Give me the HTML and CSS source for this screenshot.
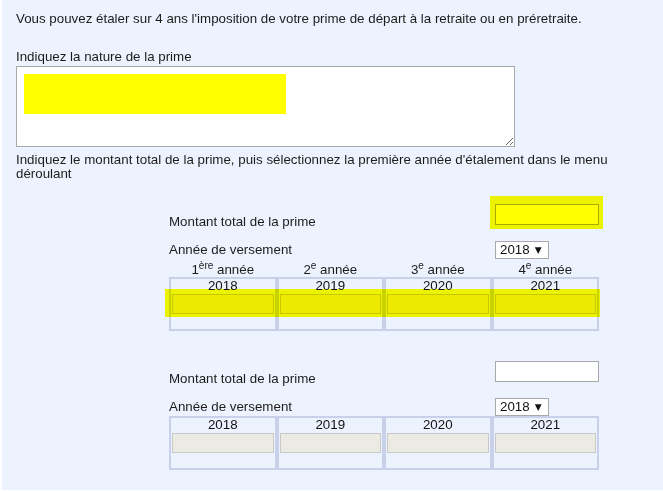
FILE: index.html
```html
<!DOCTYPE html>
<html lang="fr">
<head>
<meta charset="utf-8">
<title>Prime de départ à la retraite</title>
<link rel="stylesheet" href="styles.css">
</head>
<body>
<div class="page">
  <p class="intro">Vous pouvez étaler sur 4 ans l'imposition de votre prime de départ à la retraite ou en préretraite.</p>
  <label class="field-label" for="nature">Indiquez la nature de la prime</label>
  <div class="nature-wrap">
    <textarea id="nature" class="nature"></textarea>
    <div class="mark-nature"></div>
  </div>
  <p class="hint">Indiquez le montant total de la prime, puis sélectionnez la première année d'étalement dans le menu déroulant</p>

  <div class="block block-first">
    <div class="amount-row">
      <span class="lbl">Montant total de la prime</span>
      <span class="amount-wrap"><input class="amount" type="text"><span class="hl hl-amount"></span></span>
    </div>
    <div class="year-row">
      <span class="lbl">Année de versement</span>
      <span class="select">2018<span class="arrow">▼</span></span>
    </div>
    <div class="heads">
      <span>1<sup>ère</sup> année</span>
      <span>2<sup>e</sup> année</span>
      <span>3<sup>e</sup> année</span>
      <span>4<sup>e</sup> année</span>
    </div>
    <div class="grid">
      <div class="col"><div class="yr">2018</div><input class="cell-input" type="text" disabled></div>
      <div class="col"><div class="yr">2019</div><input class="cell-input" type="text" disabled></div>
      <div class="col"><div class="yr">2020</div><input class="cell-input" type="text" disabled></div>
      <div class="col"><div class="yr">2021</div><input class="cell-input" type="text" disabled></div>
      <span class="hl hl-row"></span>
    </div>
  </div>

  <div class="block block-second">
    <div class="amount-row">
      <span class="lbl">Montant total de la prime</span>
      <span class="amount-wrap"><input class="amount" type="text"></span>
    </div>
    <div class="year-row">
      <span class="lbl">Année de versement</span>
      <span class="select">2018<span class="arrow">▼</span></span>
    </div>
    <div class="grid">
      <div class="col"><div class="yr">2018</div><input class="cell-input" type="text" disabled></div>
      <div class="col"><div class="yr">2019</div><input class="cell-input" type="text" disabled></div>
      <div class="col"><div class="yr">2020</div><input class="cell-input" type="text" disabled></div>
      <div class="col"><div class="yr">2021</div><input class="cell-input" type="text" disabled></div>
    </div>
  </div>
</div>
</body>
</html>
```
FILE: styles.css
```css
body {
  margin: 0;
  background: #ffffff;
  font-family: "Liberation Sans", Arial, sans-serif;
  font-size: 13.333px;
  color: #1c1c1c;
}

.page {
  margin-left: 2px;
  background: #ecf3fe;
  padding: 11px 0 20px 14px;
}

.intro {
  margin: 0;
  line-height: 15px;
}

.field-label {
  display: block;
  margin-top: 23px;
  line-height: 16px;
}

.nature-wrap {
  position: relative;
  width: 499px;
  margin-top: 1px;
}

.nature {
  display: block;
  width: 499px;
  height: 81px;
  box-sizing: border-box;
  border: 1px solid #a9a9a9;
  background: #ffffff;
  margin: 0;
  padding: 2px;
  font: inherit;
}

.mark-nature {
  position: absolute;
  left: 8px;
  top: 8px;
  width: 262px;
  height: 40px;
  background: #ffff00;
}

.hint {
  margin: 6px 0 0;
  width: 600px;
  line-height: 14px;
}

.block {
  margin-left: 153px;
  width: 430px;
}

.block-first {
  margin-top: 23px;
}

.block-second {
  margin-top: 30px;
}

.amount-row {
  display: flex;
  justify-content: space-between;
  align-items: flex-start;
}

.amount-row .lbl {
  margin-top: 10px;
  line-height: 15px;
}

.amount-wrap {
  position: relative;
  display: block;
  width: 104px;
  height: 21px;
}

.amount {
  display: block;
  width: 104px;
  height: 21px;
  box-sizing: border-box;
  border: 1px solid #a9a9a9;
  background: #ffffff;
  padding: 0 3px;
  margin: 0;
  font: inherit;
}

.hl {
  background: #ffff00;
  mix-blend-mode: multiply;
  pointer-events: none;
}

.hl-amount {
  position: absolute;
  left: -5px;
  top: -8px;
  width: 113px;
  height: 33px;
}

.year-row {
  display: flex;
  align-items: flex-start;
  margin-top: 12px;
}

.year-row .lbl {
  line-height: 15px;
  margin-top: 1px;
}

.select {
  margin-left: auto;
  margin-right: 50px;
  width: 54px;
  height: 18px;
  box-sizing: border-box;
  border: 1px solid #a9a9a9;
  background: #ffffff;
  line-height: 16px;
  padding-left: 4px;
  color: #111111;
  white-space: nowrap;
}

.arrow {
  font-family: "DejaVu Sans", sans-serif;
  font-size: 9px;
  margin-left: 5px;
  vertical-align: 1px;
}

.heads {
  display: flex;
  margin-top: 3px;
  line-height: 15px;
}

.heads span {
  flex: 1;
  text-align: center;
}

.heads sup {
  font-size: 10px;
  line-height: 0;
  vertical-align: 5px;
}

.grid {
  position: relative;
  display: flex;
}

.col {
  flex: 1;
  height: 54px;
  box-sizing: border-box;
  border: 2px solid #c9d1ea;
  padding: 0 1px;
}

.yr {
  line-height: 14px;
  text-align: center;
  color: #111111;
}

.cell-input {
  display: block;
  width: 100%;
  height: 20px;
  margin: 1px 0 0;
  box-sizing: border-box;
  border: 1px solid #c8c8c8;
  background: #ebeae3;
  padding: 0;
}

.hl-row {
  position: absolute;
  left: -4px;
  top: 12px;
  width: 435px;
  height: 28px;
}
```
